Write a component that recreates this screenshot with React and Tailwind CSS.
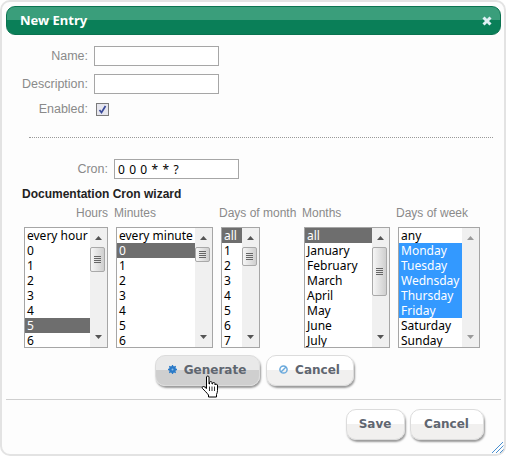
import React from 'react'

const hours = ['every hour', '0', '1', '2', '3', '4', '5', '6']
const minutes = ['every minute', '0', '1', '2', '3', '4', '5', '6']
const days = ['all', '1', '2', '3', '4', '5', '6', '7']
const months = ['all', 'January', 'February', 'March', 'April', 'May', 'June', 'July']
const weekdays = ['any', 'Monday', 'Tuesday', 'Wednsday', 'Thursday', 'Friday', 'Saturday', 'Sunday']

const Arrow = ({ up, light }) => (
  <svg width="7" height="4" viewBox="0 0 7 4" className={light ? 'text-[#9a9a9a]' : 'text-[#555]'}>
    <path d={up ? 'M3.5 0 L7 4 H0 Z' : 'M0 0 H7 L3.5 4 Z'} fill="currentColor" />
  </svg>
)

const ListBox = ({ items, width, thumb, selected = [], blue, light }) => (
  <div className={`flex h-[121px] shrink-0 overflow-hidden border border-[#a6a6a6] bg-white ${width}`}>
    <ul className="min-w-0 flex-1 overflow-hidden font-['Noto_Sans'] text-[12px] text-black">
      {items.map((item, i) => (
        <li
          key={item}
          className={`h-[15px] whitespace-nowrap pl-[2px] leading-[15px] ${
            selected.includes(i) ? (blue ? 'bg-[#3399ff] text-white' : 'bg-[#6e6e6e] text-white') : ''
          }`}
        >
          {item}
        </li>
      ))}
    </ul>
    <div className="flex w-[17px] shrink-0 flex-col items-center bg-[#f0f0f0]">
      <div className="flex h-[18px] shrink-0 items-center justify-center pt-[2px]">
        <Arrow up light={light} />
      </div>
      <div className="min-h-0 flex-1 self-stretch">
        {thumb && (
          <div className={`flex w-[15px] items-center justify-center rounded-[2px] border border-[#a9a9a9] bg-gradient-to-r from-[#f6f6f6] to-[#cfcfcf] ${thumb}`}>
            <div className="flex flex-col gap-[1px]">
              <div className="h-px w-[7px] bg-[#666]" />
              <div className="h-px w-[7px] bg-[#666]" />
              <div className="h-px w-[7px] bg-[#666]" />
              <div className="h-px w-[7px] bg-[#666]" />
            </div>
          </div>
        )}
      </div>
      <div className="flex h-[18px] shrink-0 items-center justify-center pb-[2px]">
        <Arrow light={light} />
      </div>
    </div>
  </div>
)

const GlossButton = ({ children, width, icon, hover }) => (
  <button
    className={`relative flex h-[31px] items-center justify-center gap-[7px] overflow-hidden rounded-[10px] border border-[#dcdcdc] pb-[2px] pr-[1px] font-['DejaVu_Sans'] text-[12px] font-bold text-[#5f6670] shadow-[1px_2px_2px_#9a9a9a] ${width} ${
      hover ? 'bg-[linear-gradient(#e9e9e9_50%,#cfcfcf_50%)]' : 'bg-[linear-gradient(#ffffff_50%,#f1f0ef_50%)]'
    }`}
  >
    {icon}
    {children}
  </button>
)

const GearIcon = () => (
  <svg width="9" height="9" viewBox="0 0 9 9">
    <circle cx="4.5" cy="4.5" r="3.4" fill="#2a7ac8" />
    <path d="M4.5 0v9M0 4.5h9M1.3 1.3l6.4 6.4M7.7 1.3L1.3 7.7" stroke="#2a7ac8" strokeWidth="1.3" />
    <circle cx="4.5" cy="4.5" r="1" fill="#8fc0ea" />
  </svg>
)

const CancelIcon = () => (
  <svg width="9" height="9" viewBox="0 0 9 9" fill="none">
    <circle cx="4.5" cy="4.5" r="3.6" stroke="#6aa9dc" strokeWidth="1.5" />
    <path d="M2 7L7 2" stroke="#6aa9dc" strokeWidth="1.5" />
  </svg>
)

const HandCursor = () => (
  <svg width="18" height="23" viewBox="0 0 18 23" className="absolute left-[201px] top-[375px]">
    <path
      d="M5.500 2c0-1.300 2.500-1.300 2.500 0V9h.5V7.500c0-1.200 2.500-1.200 2.500 0V9h.5V8.500c0-1.200 2.500-1.200 2.500 0V10c0-1 2.500-1 2.500 0V15.500c0 1.600-.5 2.800-1 4V22H7.500V20C6 18 3.500 15.500 1.500 13.500c-1-1.200.5-2.700 1.800-1.700L5.500 13.500Z"
      fill="#fff"
      stroke="#000"
      strokeWidth="1"
      strokeLinejoin="round"
    />
    <path d="M8.500 11.500v4.500M11 11.500v4.500M13.500 11.500v4.500" stroke="#000" strokeWidth="0.8" />
  </svg>
)

const App = () => {
  return (
    <div className="relative h-[457px] w-[507px] bg-white font-['Liberation_Sans'] text-[12px] text-[#8a8a8a]">
      <div className="flex h-[456px] w-[506px] flex-col rounded-[10px] border-2 border-[#e3e3e3] bg-[#fdfdfd] pl-[4px] pr-[3px] pt-[4px]">
        {/* title bar */}
        <div className="flex h-[29px] shrink-0 items-center justify-between overflow-hidden rounded-[9px] border border-[#0a7350] bg-[linear-gradient(#3a9e7b_50%,#0a7f58_50%)] pl-[13px] pr-[8px] text-white">
          <span className="font-['Noto_Sans'] text-[13px] font-bold">New Entry</span>
          <svg width="10" height="10" viewBox="0 0 10 10">
            <path d="M1.500 1.500L8.500 8.500M8.500 1.500L1.500 8.500" stroke="#dff0f4" strokeWidth="3" />
          </svg>
        </div>

        {/* name, description, enabled */}
        <div className="mt-[11px] flex flex-col text-[12.5px]">
          <div className="flex h-[20px] items-center">
            <label className="w-[82px] shrink-0 text-right">Name:</label>
            <input className="ml-[6px] h-[20px] w-[125px] border border-[#a6a6a6] bg-white" />
          </div>
          <div className="mt-[8px] flex h-[20px] items-center">
            <label className="w-[82px] shrink-0 text-right">Description:</label>
            <input className="ml-[6px] h-[20px] w-[125px] border border-[#a6a6a6] bg-white" />
          </div>
          <div className="mt-[9px] flex h-[13px] items-center">
            <label className="w-[82px] shrink-0 text-right">Enabled:</label>
            <div className="ml-[8px] flex h-[13px] w-[13px] items-center justify-center border border-[#7b7b7b] bg-[#e6e6ee]">
              <svg width="9" height="9" viewBox="0 0 9 9" fill="none">
                <path d="M1.500 5L3.500 7.500L7.500 1" stroke="#3a4a9a" strokeWidth="1.700" />
              </svg>
            </div>
          </div>
        </div>

        <div className="ml-[23px] mr-[8px] mt-[21px] border-t border-dotted border-[#999]" />

        {/* cron */}
        <div className="mt-[21px] flex h-[20px] items-center">
          <label className="w-[102px] shrink-0 text-right text-[12.5px]">Cron:</label>
          <input
            readOnly
            value="0 0 0 * * ?"
            className="ml-[6px] h-[20px] w-[125px] border border-[#a6a6a6] bg-white px-[3px] font-['Noto_Sans'] text-[12px] tracking-[0.6px] text-black"
          />
        </div>

        <div className="ml-[16px] mt-[8px] h-[15px] font-['Liberation_Sans'] text-[12px] font-bold leading-[15px] text-[#222]">
          Documentation Cron wizard
        </div>

        {/* wizard columns */}
        <div className="mt-[4px] flex h-[14px] leading-[14px]">
          <span className="ml-[70px] w-[38px]">Hours</span>
          <span className="w-[105px]">Minutes</span>
          <span className="w-[83px]">Days of month</span>
          <span className="w-[94px]">Months</span>
          <span>Days of week</span>
        </div>
        <div className="mt-[7px] flex items-start">
          <div className="ml-[18px]"><ListBox items={hours} width="w-[84px]" thumb="mt-[1px] h-[25px]" selected={[6]} /></div>
          <div className="ml-[8px]"><ListBox items={minutes} width="w-[97px]" thumb="mt-[1px] h-[15px]" selected={[1]} /></div>
          <div className="ml-[8px]"><ListBox items={days} width="w-[39px]" thumb="mt-[1px] h-[19px]" selected={[0]} /></div>
          <div className="ml-[44px]"><ListBox items={months} width="w-[86px]" thumb="mt-[1px] h-[49px]" selected={[0]} /></div>
          <div className="ml-[8px]"><ListBox items={weekdays} width="w-[82px]" selected={[1, 2, 3, 4, 5]} blue light /></div>
        </div>

        {/* generate / cancel */}
        <div className="ml-[149px] mt-[7px] flex gap-[6px]">
          <GlossButton width="w-[105px]" icon={<GearIcon />} hover>Generate</GlossButton>
          <GlossButton width="w-[88px]" icon={<CancelIcon />}>Cancel</GlossButton>
        </div>

        <div className="mt-[13px] border-t border-[#cfcfcf]" />

        {/* save / cancel */}
        <div className="mr-[17px] mt-[9px] flex justify-end gap-[5px]">
          <GlossButton width="w-[59px]">Save</GlossButton>
          <GlossButton width="w-[74px]">Cancel</GlossButton>
        </div>
      </div>

      {/* resize grip */}
      <svg width="12" height="11" viewBox="0 0 12 11" className="absolute left-[492px] top-[442px]">
        <path d="M0 11L11 0M4 11L11.500 3.500M8 11L11.500 7.500" stroke="#4a90d0" strokeWidth="1" />
      </svg>

      <HandCursor />
    </div>
  )
}

export default App
